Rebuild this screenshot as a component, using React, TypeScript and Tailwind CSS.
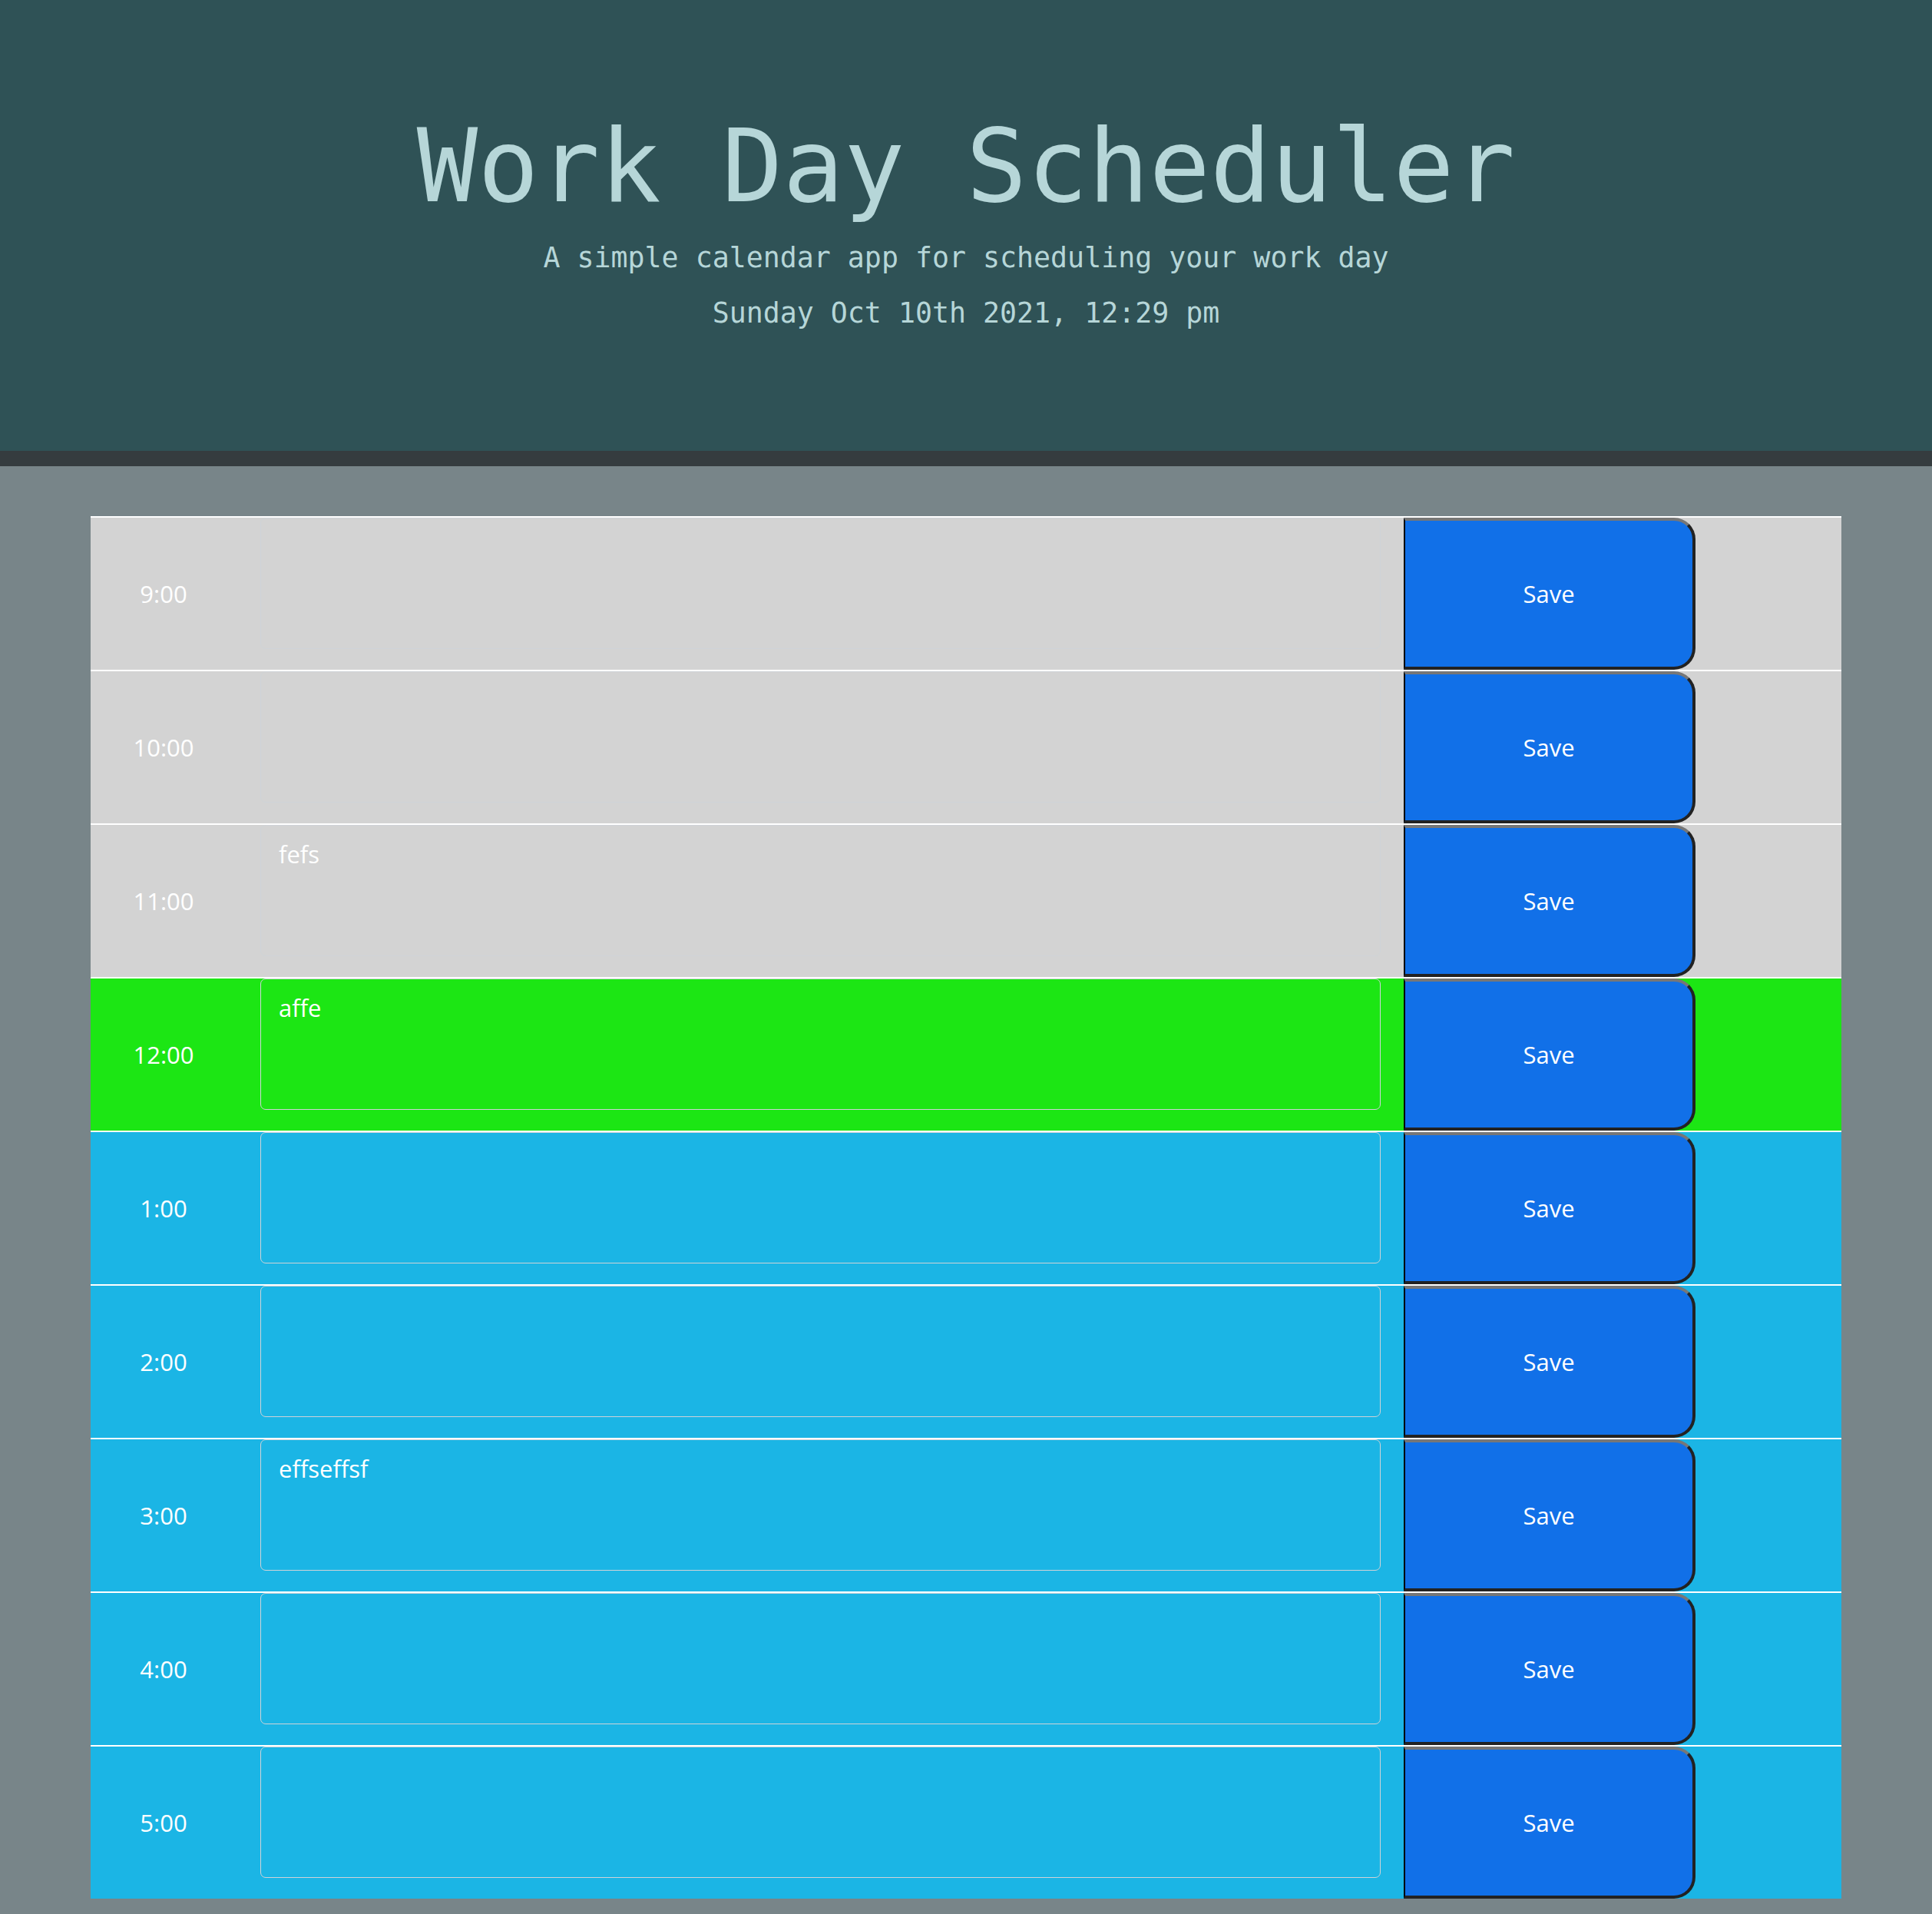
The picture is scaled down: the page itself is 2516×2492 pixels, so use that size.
const hours = [
  { label: '9:00', status: 'past', note: '' },
  { label: '10:00', status: 'past', note: '' },
  { label: '11:00', status: 'past', note: 'fefs' },
  { label: '12:00', status: 'present', note: 'affe' },
  { label: '1:00', status: 'future', note: '' },
  { label: '2:00', status: 'future', note: '' },
  { label: '3:00', status: 'future', note: 'effseffsf' },
  { label: '4:00', status: 'future', note: '' },
  { label: '5:00', status: 'future', note: '' },
];

const rowBg: Record<string, string> = {
  past: 'bg-[#d3d3d3]',
  present: 'bg-[#1ce614]',
  future: 'bg-[#1bb5e5]',
};

function TimeBlock({ label, status, note }: { label: string; status: string; note: string }) {
  return (
    <div className={`flex h-[200px] border-t-2 border-white ${rowBg[status]}`}>
      <div className="flex w-[190px] items-center justify-center text-[31px] text-white">{label}</div>
      <div className="w-[1520px] pl-[31px] pr-[30px]">
        <textarea
          defaultValue={note}
          className="block h-[171px] w-full resize-none rounded-[7px] border border-[#cfd3d8] bg-transparent pt-[14px] pb-[11px] pl-[23px] pr-[22px] text-[31px] leading-[1.5] text-white outline-none"
        />
      </div>
      <button className="h-full w-[380px] rounded-r-[28px] border-solid border-t-4 border-r-4 border-b-4 border-l-2 border-t-[#777777] border-r-[#222222] border-b-[#222222] border-l-black bg-[#1170e8] text-[31px] text-white">
        Save
      </button>
    </div>
  );
}

export default function App() {
  return (
    <div className="min-h-[2492px] bg-[#788589] pb-[20px] font-['Open_Sans',sans-serif]">
      <header className="h-[607px] border-b-[20px] border-[#353c3f] bg-[#2f5256] pt-[137px] text-center font-['DejaVu_Sans_Mono',monospace] text-[#b6d6d8]">
        <h1 className="mb-[13px] text-[132px] leading-[158px] font-normal">Work Day Scheduler</h1>
        <p className="mb-[17px] text-[36.6px] leading-[55px]">A simple calendar app for scheduling your work day</p>
        <p className="text-[36.6px] leading-[55px]">Sunday Oct 10th 2021, 12:29 pm</p>
      </header>

      <div className="mx-auto mt-[65px] w-[2280px]">
        {hours.map((h) => (
          <TimeBlock key={h.label} {...h} />
        ))}
      </div>
    </div>
  );
}
